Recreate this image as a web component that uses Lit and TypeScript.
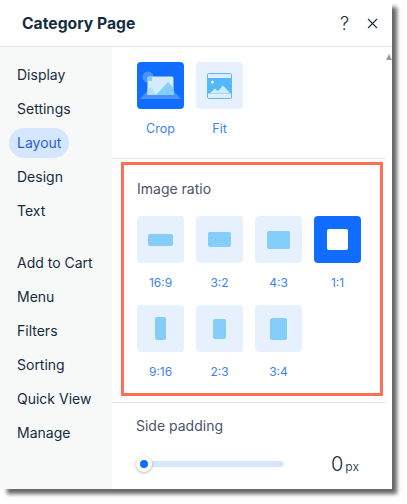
import { LitElement, html, css, svg } from "lit";
import { customElement } from "lit/decorators.js";

const NAV1 = ["Display", "Settings", "Layout", "Design", "Text"];
const NAV2 = ["Add to Cart", "Menu", "Filters", "Sorting", "Quick View", "Manage"];
const R1: [string, number, number, boolean][] = [
  ["16:9", 25, 12, false],
  ["3:2", 23, 15, false],
  ["4:3", 23, 18, false],
  ["1:1", 21, 21, true],
];
const R2: [string, number, number, boolean][] = [
  ["9:16", 11, 23, false],
  ["2:3", 13, 20, false],
  ["3:4", 17, 22, false],
];

const cropIcon = svg`<svg width="47" height="47" viewBox="0 0 47 47">
  <path d="M3 37 L11 28 H36 L44 37 Z" fill="#4a93ff"/>
  <circle cx="11" cy="15" r="5.5" fill="#4a93ff"/>
  <rect x="10.500" y="14.500" width="26" height="18.500" rx="1.500" fill="#d6ecff"/>
  <path d="M19 33 L31 20 L36.500 26 V33 Z" fill="#84ceff"/>
  <path d="M10.500 33 V27 L15 25 L19 33 Z" fill="#b4e0ff"/>
  <path d="M10.500 15 H15 V19 H10.500 Z" fill="#84ceff"/>
</svg>`;

const fitIcon = svg`<svg width="47" height="47" viewBox="0 0 47 47">
  <rect x="11.500" y="11.500" width="24" height="25" rx="1" fill="none" stroke="#5cb8f8"/>
  <rect x="12" y="12" width="23" height="3" fill="#dceefd"/>
  <rect x="12" y="33" width="23" height="3" fill="#dceefd"/>
  <rect x="12" y="16" width="23" height="15.500" fill="#52b8f8"/>
  <circle cx="16.500" cy="20" r="1.500" fill="#e3f2fe"/>
  <path d="M14 31 L19 26.500 L22 29 L27 23.500 L34 31 Z" fill="#cfe9fc"/>
</svg>`;

@customElement("app-root")
export class AppRoot extends LitElement {
  static styles = css`
    :host {
      display: block;
      width: 407px;
      height: 504px;
      background: #fff;
      font-family: "Inter", "Liberation Sans", sans-serif;
      overflow: hidden;
    }
    .panel {
      position: relative;
      width: 392px;
      height: 489px;
      background: #fff;
      display: flex;
      flex-direction: column;
      box-shadow: 6px 6px 4px -1px rgba(0, 0, 0, 0.6);
    }
    header {
      height: 47px;
      flex: none;
      box-sizing: border-box;
      border-bottom: 1px solid #dfe5eb;
      display: flex;
      align-items: center;
      padding: 0 14px 0 22px;
      color: #162d3d;
    }
    h1 {
      margin: 0;
      flex: 1;
      font-size: 15.700px;
      font-weight: 700;
    }
    .help {
      font-size: 18px;
      font-weight: 300;
      margin-right: 18px;
      color: #20303c;
    }
    .close {
      display: block;
    }
    .body {
      flex: 1;
      display: flex;
      min-height: 0;
    }
    nav {
      width: 112px;
      flex: none;
      background: #f7f8f8;
      padding: 13px 0 0 9px;
      box-sizing: border-box;
      font-size: 14px;
      color: #162d3d;
    }
    .group {
      display: flex;
      flex-direction: column;
      align-items: flex-start;
      gap: 4px;
    }
    .group + .group {
      margin-top: 22px;
    }
    .item {
      height: 30px;
      line-height: 30px;
      padding: 0 8px;
      border-radius: 15px;
    }
    .item.on {
      background: #d6e6fe;
      color: #2b5fd9;
    }
    main {
      flex: 1;
      min-width: 0;
      padding-right: 6px;
      display: flex;
      flex-direction: column;
    }
    .top {
      padding: 15px 0 0 25px;
      height: 112px;
      box-sizing: border-box;
      border-bottom: 1px solid #dfe5eb;
      flex: none;
    }
    .tiles {
      display: grid;
      grid-template-columns: repeat(4, 47px);
      column-gap: 12px;
      row-gap: 15px;
    }
    .opt {
      display: flex;
      flex-direction: column;
      align-items: center;
      width: 47px;
    }
    .tile {
      width: 47px;
      height: 47px;
      border-radius: 4px;
      background: #e7f0fd;
      display: flex;
      align-items: center;
      justify-content: center;
    }
    .tile.on {
      background: #116dff;
    }
    .shape {
      background: #84cdf9;
      border-radius: 2px;
    }
    .tile.on .shape {
      background: #fff;
    }
    .lbl {
      font-size: 12px;
      line-height: 14px;
      margin-top: 13px;
      color: #3b82f0;
      white-space: nowrap;
    }
    .top .lbl {
      font-size: 12.500px;
      line-height: 16px;
      margin-top: 12px;
    }
    .ratio {
      margin: 3px 3px 0 9px;
      height: 234px;
      box-sizing: border-box;
      border: 3px solid #ff6f55;
      padding: 16px 0 0 13px;
      flex: none;
    }
    .title {
      font-size: 14px;
      line-height: 16px;
      color: #4a5568;
    }
    .ratio .tiles {
      margin-top: 19px;
    }
    .pad {
      margin-top: 6px;
      border-top: 1px solid #dfe5eb;
      padding: 15px 0 0 24px;
      flex: 1;
    }
    .slide {
      display: flex;
      align-items: center;
      margin-top: 18px;
    }
    .track {
      position: relative;
      width: 144px;
      height: 6px;
      margin-left: 4px;
      border-radius: 3px;
      background: #d6e6fe;
    }
    .knob {
      position: absolute;
      left: -4px;
      top: -5px;
      width: 16px;
      height: 16px;
      box-sizing: border-box;
      border: 4px solid #fff;
      border-radius: 50%;
      background: #116dff;
      box-shadow: 0 1px 3px rgba(22, 45, 61, 0.35);
    }
    .val {
      margin-left: 47px;
      display: flex;
      align-items: baseline;
      color: #162d3d;
      font-size: 20px;
      font-weight: 300;
    }
    .val small {
      font-size: 12px;
      font-weight: 400;
      margin-left: 2px;
      color: #3b4a57;
    }
    .thumb {
      position: absolute;
      right: 0;
      top: 54px;
      width: 0;
      height: 0;
      border-left: 3px solid transparent;
      border-right: 3px solid transparent;
      border-bottom: 6px solid #9a9a9a;
    }
  `;

  private opt(o: [string, number, number, boolean]) {
    const [label, w, h, on] = o;
    return html`<div class="opt">
      <div class="tile ${on ? "on" : ""}">
        <div class="shape" style="width:${w}px;height:${h}px"></div>
      </div>
      <div class="lbl">${label}</div>
    </div>`;
  }

  render() {
    const item = (n: string) =>
      html`<div class="item ${n === "Layout" ? "on" : ""}">${n}</div>`;
    return html`<div class="panel">
      <header>
        <h1>Category Page</h1>
        <span class="help">?</span>
        <svg class="close" width="11" height="11" viewBox="0 0 11 11">
          <path d="M1 1 L10 10 M10 1 L1 10" stroke="#20303c" stroke-width="1.100" fill="none"/>
        </svg>
      </header>
      <div class="body">
        <nav>
          <div class="group">${NAV1.map(item)}</div>
          <div class="group">${NAV2.map(item)}</div>
        </nav>
        <main>
          <div class="top">
            <div class="tiles">
              <div class="opt">
                <div class="tile on">${cropIcon}</div>
                <div class="lbl">Crop</div>
              </div>
              <div class="opt">
                <div class="tile">${fitIcon}</div>
                <div class="lbl">Fit</div>
              </div>
            </div>
          </div>
          <section class="ratio">
            <div class="title">Image ratio</div>
            <div class="tiles">
              ${R1.map((o) => this.opt(o))} ${R2.map((o) => this.opt(o))}
            </div>
          </section>
          <section class="pad">
            <div class="title">Side padding</div>
            <div class="slide">
              <div class="track"><div class="knob"></div></div>
              <div class="val">0<small>px</small></div>
            </div>
          </section>
        </main>
      </div>
      <div class="thumb"></div>
    </div>`;
  }
}
